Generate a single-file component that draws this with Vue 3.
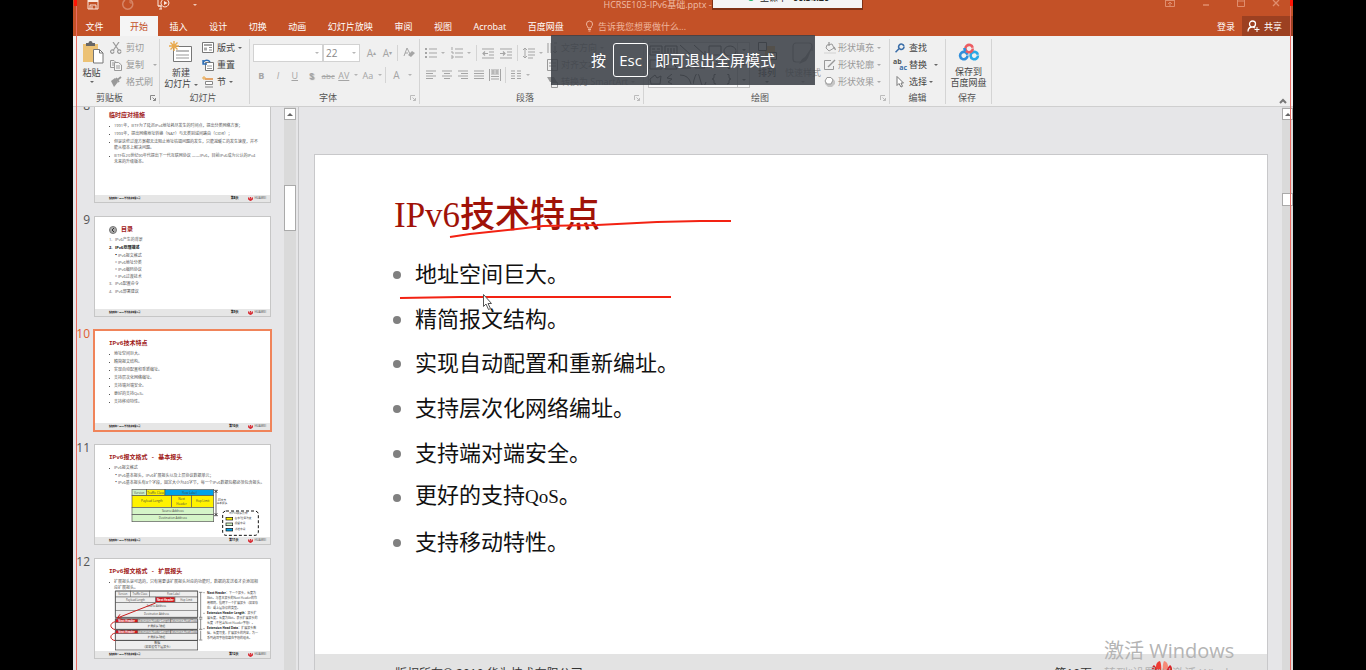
<script setup>
import { h } from 'vue'

const icons = {
  save: [12, 10, [['M1 -2V9H11V-2', 1], ['M3 9V5H9V9', 1], ['M1 1H11', 2], ['M5 6V9', 1]]],
  redo: [12, 10, [['M8.500 0A5 5 0 1 1 3 0', 1.5], ['M8 -1V3H11', 1]]],
  show: [13, 10, [['M1 -1V6H4M1 6H5', 1], ['M5 9H2M4 6V9', 1], ['M8 -1A4 4 0 1 1 7.900 -1', 1], ['M7 1L10.500 3L7 5Z', 0, 'currentColor']]],
  ribbonopts: [10, 8, [['M.5 0V6.500H9.500V0M0 .5H10', 1], ['M5 6V2M3 4L5 2L7 4', 1]]],
  min: [8, 8, [['M1 5H7', 1.5]]],
  max: [8, 8, [['M.5 0V6.500H7.500V0M0 1H8', 1]]],
  close: [8, 8, [['M1 0L7 6M7 0L1 6', 1.3]]],
  bulb: [9, 12, [['M3 8C3 6.500 1.500 6 1.500 4A3 3 0 0 1 7.500 4C7.500 6 6 6.500 6 8Z', 1], ['M3 9.500H6M3.500 11H5.500', 1]]],
  user: [13, 12, [['M8.500 4A3 3 0 1 1 5.500 1A3 3 0 0 1 8.500 4M1 11.500C1 8.500 3 7 5.500 7C6.500 7 7.500 7.500 8 8', 1.3], ['M10 7V12M7.500 9.500H12.500', 1]]],
  paste: [22, 23, [['M1 3H16V21H1Z', 0, '#ecc275'], ['M4 5V2H6.500A2 2 0 0 1 10.500 2H13V5Z', 0, '#666'], ['M11.500 8.500H17.500L21 12V22H11.500Z', 1, '#fff', '#777'], ['M17.500 8.500V12H21', 1, 'none', '#777']]],
  cut: [12, 12, [['M3 0L8.500 8M9 0L3.500 8', 1.2], ['M4 9.500A1.700 1.700 0 1 1 3.900 9M11 9.500A1.700 1.700 0 1 1 10.900 9', 1.2]]],
  copy: [12, 12, [['M4 8.500H.5V1.500H4L6 3.500', 1], ['M4.500 3.500H8.500L11.500 6V11.500H4.500Z', 1, '#f5f5f5'], ['M2 4H4M2 6H4M6 7H10M6 9H10', 1]]],
  brush: [12, 12, [['M1 5L5 2L8 6L4 11Z', 0, 'currentColor'], ['M6 5L11 1M6 2L9 6', 1.8]]],
  newslide: [24, 22, [['M4.500 5.500H22.500V20.500H4.500Z', 1, '#fff', '#777'], ['M7 9H20V11H7Z', 0, '#bbb'], ['M7 14H20M7 17H20', 1, 'none', '#999'], ['M5 0V10M0 5H10M1.500 1.500L8.500 8.500M8.500 1.500L1.500 8.500', 1.4, 'none', '#e9a94c']]],
  layout: [12, 11, [['M.5 .5H11.500V10.500H.5Z', 1, '#fff', '#777'], ['M2 3H10', 1.500, 'none', '#888'], ['M2 5.500H5V8.500H2Z', 0, '#aaa'], ['M7 5.500H10M7 8H10', 1, 'none', '#888']]],
  reset: [12, 12, [['M3.500 3.500H11.500V11.500H3.500Z', 1, '#fff', '#777'], ['M5 7H10M5 9.500H10', 1, 'none', '#999'], ['M1 5C1 1 6 0 8 3M1 1V5H5', 1.4, 'none', '#2c6db5']]],
  section: [12, 12, [['M3 3H11', 1.500, 'none', '#e08b3c'], ['M3.500 5.500H10.500V8.500H3.500Z', 1, '#fff', '#888'], ['M3 11H11', 1, 'none', '#888'], ['M2 0V4M0 2H4', 1, 'none', '#e9a94c']]],
  eraser: [12, 12, [['M1 9L4 1L7 7M2 6H5', 1], ['M5 8L9 4L12 6L8 10Z', 0, 'currentColor']]],
  bullets: [12, 12, [['M4 2H12M4 6H12M4 10H12', 1], ['M0 2H2M0 6H2M0 10H2', 2]]],
  numbers: [12, 12, [['M4 2H12M4 6H12M4 10H12', 1], ['M1 0V3M0 5H2V7M0 9H2V11H0', 1]]],
  outdent: [12, 11, [['M0 1H12M7 4H12M7 7H12M0 10H12', 1], ['M6 5.500H1M3 3.500L1 5.500L3 7.500', 1.2]]],
  indent: [12, 11, [['M0 1H12M7 4H12M7 7H12M0 10H12', 1], ['M0 5.500H5M3 3.500L5 5.500L3 7.500', 1.2]]],
  spacing: [12, 12, [['M5 2H12M5 5H12M5 8H12M5 11H10', 1], ['M2 1V11M0 3L2 1L4 3M0 9L2 11L4 9', 1]]],
  left: [12, 10, [['M1 1H11M1 3.500H8M1 6H11M1 8.500H8', 1]]],
  center: [12, 10, [['M1 1H11M3 3.500H9M1 6H11M3 8.500H9', 1]]],
  right: [12, 10, [['M1 1H11M4 3.500H11M1 6H11M4 8.500H11', 1]]],
  justify: [12, 10, [['M1 1H11M1 3.500H11M1 6H11M1 8.500H11', 1]]],
  distribute: [12, 12, [['M.5 0V12M11.500 0V12M2 1H10M2 5H10M2 7.500H10M2 10H10', 1], ['M2 3H10M4 1V5M8 1V5', 1]]],
  columns: [12, 10, [['M1 1H5M1 3.500H5M1 6H5M1 8.500H5M7 1H11M7 3.500H11M7 6H11M7 8.500H11', 1]]],
  textdir: [11, 12, [['M1 1V11M4 1V11M8 4V11M6 9L8 11L10 9M7 1H10', 1]]],
  textalign: [11, 12, [['M.5 .5H10.500V11.500H.5Z', 1], ['M2 4H9M2 7H9M5 1V3M5 9V11', 1]]],
  smart: [11, 12, [['M0 1H7L10 6H3Z', 0, 'currentColor'], ['M4.500 6.500H10.500V11.500H4.500Z', 1]]],
  arrange: [22, 20, [['M9 5H19V15H9Z', 0, '#edbb64'], ['M2.500 1.500H10.500V9.500H2.500Z', 1, '#fff', '#555'], ['M13.500 11.500H20.500V18.500H13.500Z', 1, '#fff', '#555']]],
  quick: [24, 24, [['M4 2H18Q21 2 21 5V10M2 6Q2 2 5 2M2 5V18Q2 21 5 21H10', 1.2], ['M22 4L14 16L11 18L8 23L15 20L17 17Z', 0, 'currentColor']]],
  fill: [12, 12, [['M3 3L8 2L10 6L5 9L2 6Z', 1], ['M5 4V0M10 5L11.500 8', 1.3], ['M0 11H12', 1.5, 'none', '#ddd']]],
  outline: [12, 12, [['M7 1.500H.5V10.500H9.500V7', 1], ['M4 8L11 1', 1.5]]],
  effect: [12, 12, [['M3 2H8L11 5V8L8 11H4L1 8V5Z', 0, '#c5c5c5'], ['M3 1.500H7L9 4L7 8H3L1 5Z', 1, '#fff']]],
  find: [10, 10, [['M9 3.500A2.700 2.700 0 1 1 8.900 3M4.200 5.500L.5 9.300', 1.6, 'none', '#3b6ea8']]],
  select: [8, 12, [['M1 .5V9.500L3 7.500L5 11L6.500 10.300L5 7H7.500Z', 1, '#fff', '#777']]],
  cloud: [22, 18, [['M9.500 12.500A3.700 3.700 0 1 1 9.400 11.700', 2.600, 'none', '#2f8fdc'], ['M20 12.500A3.700 3.700 0 1 1 19.900 11.700', 2.600, 'none', '#2aa9e6'], ['M14.800 5.500A3.700 3.700 0 1 1 14.700 4.700', 2.600, 'none', '#ec5c62'], ['M7.500 8.500A5 5 0 0 1 6.500 5', 2.600, 'none', '#2f8fdc']]],
  launch: [6, 6, [['M.5 5V.5H5M2.500 2.500L5.500 5.500M5.500 3V5.500H3', 1]]]
}

const Icon = ({ name }) => {
  const [w, hgt, shapes] = icons[name]
  return h('svg', { width: w, height: hgt, viewBox: `0 0 ${w} ${hgt}`, 'aria-hidden': 'true' },
    shapes.map(([d, sw, fill = 'none', stroke = 'currentColor']) =>
      h('path', { d, fill, stroke: sw ? stroke : 'none', 'stroke-width': sw || 0 })))
}
Icon.props = ['name']

const tabs = ['开始', '插入', '设计', '切换', '动画', '幻灯片放映', '审阅', '视图', 'Acrobat', '百度网盘']
const aligns = ['left', 'center', 'right', 'justify']
const shapes = [
  'M1 1H13V10H1ZM3 4H6M3 7H11M8 4H11', 'M1 1H13V10H1ZM4 3V8M7 3V8M10 3V8', 'M1 0L12 10', 'M1 0L12 10M8 10H12V6', 'M1 1H13V10H1Z', 'M13 5.500A6 5 0 1 1 12.900 5',
  'M1 1H13V10H1Z', 'M7 0L13 10H1Z', 'M2 1V9H12', 'M2 1V9H12L9 6', 'M1 5H12L8 2M12 5L8 8', 'M6 0V10L3 6M6 10L9 6',
  'M2 10L1 5L6 1L8 4L12 2L11 10Z', 'M8 0L3 4L8 5L4 8L8 10', 'M1 1Q10 1 12 10', 'M0 10Q4 -8 7 5T13 8', 'M8 0Q5 0 6 3Q6 5 4 5Q6 5 6 7Q5 10 8 10', 'M4 0Q7 0 6 3Q6 5 8 5Q6 5 6 7Q7 10 4 10'
]

const points = ['地址空间巨大。', '精简报文结构。', '实现自动配置和重新编址。', '支持层次化网络编址。', '支持端对端安全。', '更好的支持QoS。', '支持移动特性。']

const slides = [
  { n: 8, title: '临时应对措施', items: [
    { t: '1991年，IETF为了延迟IPv4地址耗尽发生的时间点，提出分类网络方案；' },
    { t: '1993年，提出网络地址转换（NAT）与无类别域间路由（CIDR）；' },
    { t: '但是这些过渡方案都无法阻止地址枯竭问题的发生，只能减缓它的发生速度，并不\n能从根本上解决问题。' },
    { t: 'IETF在20世纪90年代提出下一代互联网协议 ——IPv6，目前IPv6成为公认的IPv4\n未来的升级版本。' }
  ] },
  { n: 9, title: '目录', toc: true, items: [
    { m: '1.', t: 'IPv6产生的背景', k: 'num' }, { m: '2.', t: 'IPv6原理描述', k: 'num strong' },
    { m: '▪', t: 'IPv6报文格式', k: 'sub dark' }, { m: '▫', t: 'IPv6地址分类', k: 'sub' },
    { m: '▫', t: 'IPv6编码协议', k: 'sub' }, { m: '▫', t: 'IPv6过渡技术', k: 'sub' },
    { m: '3.', t: 'IPv6配置命令', k: 'num' }, { m: '4.', t: 'IPv6部署建议', k: 'num' }
  ] },
  { n: 10, title: 'IPv6技术特点', active: true, items: points.map(t => ({ t })) },
  { n: 11, title: 'IPv6报文格式 - 基本报头', items: [
    { t: 'IPv6报文格式' },
    { m: '▪', t: 'IPv6基本报头，IPv6扩展报头以及上层协议数据单元；', k: 'sub' },
    { m: '▪', t: 'IPv6基本报头有8个字段，固定大小为40字节，每一个IPv6数据包都必须包含报头。', k: 'sub' }
  ] },
  { n: 12, title: 'IPv6报文格式 - 扩展报头', items: [
    { t: '扩展报头是可选的，只有需要该扩展报头对应的功能时，数据的发送者才会添加相\n应扩展报头。' }
  ] }
]

const basicCells = [
  [186, 154, 43, 18, '#ccefca', 'Version'], [229, 154, 56, 18, '#fff200', 'Traffic Class'], [285, 154, 146, 18, '#00a2e8', 'Flow Label'],
  [186, 172, 119, 35, '#fff200', 'Payload Length'], [305, 172, 59, 35, '#fff200', 'Next', 'Header'], [364, 172, 67, 35, '#fff200', 'Hop Limit'],
  [186, 207, 245, 22, '#d5f5c8', 'Source Address'], [186, 229, 245, 21, '#d5f5c8', 'Destination Address']
]
const extCells = [
  [136, 116, 45, 18, '#eee', 'Version'], [181, 116, 57, 18, '#eee', 'Traffic Class'], [238, 116, 145, 18, '#eee', 'Flow Label'],
  [136, 134, 121, 17, '#eee', 'Payload Length'], [257, 134, 58, 17, '#d4161b', 'Next Header'], [315, 134, 68, 17, '#eee', 'Hop Limit'],
  [136, 151, 247, 23, '#eee', 'Source Address'], [136, 174, 247, 21, '#eee', 'Destination Address'],
  [136, 211, 247, 20, '#eee', '扩展报头1数据'], [136, 200, 68, 11, '#d4161b', 'Next Header'], [204, 200, 98, 11, '#eee', 'Extension Header Length'], [302, 200, 81, 11, '#eee', 'Extension Head Data'],
  [136, 244, 247, 20, '#eee', '扩展报头2数据'], [136, 233, 68, 11, '#d4161b', 'Next Header'], [204, 233, 98, 11, '#eee', 'Extension Header Length'], [302, 233, 81, 11, '#eee', 'Extension Head Data']
]
const notes = ['Next Header：下一个报头，长度为', '8bit。与基本报头的Next Header的作', '用相同，指明下一个扩展报头（如果存', '在）或上层协议的类型。', 'Extension Header Length：报头扩', '展长度，长度为8bit。表示扩展报头的', '长度（不包含Next Header字段）。', 'Extension Head Data：扩展报头数', '据，长度可变，扩展报头的内容，为一', '系列选项字段和填充字段的组合。']
</script>

<template>
  <div class="screen" lang="zh-CN">
    <div class="app">
      <header class="titlebar">
        <div class="quick">
          <button aria-label="保存"><Icon name="save" /></button>
          <button aria-label="重做" class="dim"><Icon name="redo" /></button>
          <button aria-label="从头开始放映"><Icon name="show" /></button>
          <button aria-label="自定义快速访问工具栏"><i class="caret"></i></button>
        </div>
        <div class="doc">HCRSE103-IPv6基础.pptx - PowerPoint</div>
        <div class="win">
          <button aria-label="功能区显示选项"><Icon name="ribbonopts" /></button>
          <button aria-label="最小化"><Icon name="min" /></button>
          <button aria-label="最大化"><Icon name="max" /></button>
          <button aria-label="关闭"><Icon name="close" /></button>
        </div>
      </header>

      <nav class="tabbar">
        <button class="file">文件</button>
        <div class="tabs">
          <button v-for="t in tabs" :key="t" class="tab" :class="{ on: t === '开始' }">{{ t }}</button>
        </div>
        <button class="tell"><Icon name="bulb" />告诉我您想要做什么...</button>
        <button class="login">登录</button>
        <button class="share"><Icon name="user" />共享</button>
      </nav>

      <section class="ribbon">
        <div class="group clip">
          <div class="body">
            <button class="big"><Icon name="paste" /><span>粘贴</span><i class="caret"></i></button>
            <div class="rows off">
              <button><Icon name="cut" />剪切</button>
              <button><Icon name="copy" />复制<i class="caret far"></i></button>
              <button><Icon name="brush" />格式刷</button>
            </div>
          </div>
          <div class="label"><span>剪贴板</span><Icon name="launch" /></div>
        </div>

        <div class="group slidesg">
          <div class="body">
            <button class="big"><Icon name="newslide" /><span>新建</span><span>幻灯片 <i class="caret"></i></span></button>
            <div class="rows">
              <button><Icon name="layout" />版式<i class="caret"></i></button>
              <button><Icon name="reset" />重置</button>
              <button><Icon name="section" />节<i class="caret"></i></button>
            </div>
          </div>
          <div class="label"><span>幻灯片</span></div>
        </div>

        <div class="group fontg">
          <div class="body lines off">
            <div class="line">
              <div class="combo family"><select aria-label="字体"><option></option></select><i class="caret"></i></div>
              <div class="combo size"><select aria-label="字号"><option>22</option></select><i class="caret"></i></div>
              <button class="grow" aria-label="增大字号">A<sup>▴</sup></button>
              <button class="grow small" aria-label="减小字号">A<sup>▾</sup></button>
              <i class="sep"></i>
              <button aria-label="清除格式"><Icon name="eraser" /></button>
            </div>
            <div class="line glyphs">
              <button><b>B</b></button>
              <button><em>I</em></button>
              <button><u>U</u></button>
              <button class="shadow"><b>S</b></button>
              <button class="abc"><s>abc</s></button>
              <button class="av"><u>AV</u><i class="caret"></i></button>
              <button class="aa">Aa<i class="caret"></i></button>
              <i class="sep"></i>
              <button class="fc">A<i class="caret"></i></button>
            </div>
          </div>
          <div class="label"><span>字体</span><Icon name="launch" class="faint" /></div>
        </div>

        <div class="group para">
          <div class="body off">
            <div class="lines">
              <div class="line">
                <button aria-label="项目符号"><Icon name="bullets" /><i class="caret"></i></button>
                <button aria-label="编号"><Icon name="numbers" /><i class="caret"></i></button>
                <i class="sep"></i>
                <button aria-label="减少缩进"><Icon name="outdent" /></button>
                <button aria-label="增加缩进"><Icon name="indent" /></button>
                <i class="sep"></i>
                <button aria-label="行距"><Icon name="spacing" /><i class="caret"></i></button>
              </div>
              <div class="line tight">
                <button v-for="a in aligns" :key="a" :aria-label="a"><Icon :name="a" /></button>
                <button aria-label="分散对齐"><Icon name="distribute" /></button>
                <i class="sep"></i>
                <button aria-label="分栏"><Icon name="columns" /><i class="caret"></i></button>
              </div>
            </div>
            <div class="rows">
              <button><Icon name="textdir" />文字方向<i class="caret"></i></button>
              <button><Icon name="textalign" />对齐文本<i class="caret"></i></button>
              <button><Icon name="smart" />转换为 SmartArt<i class="caret"></i></button>
            </div>
          </div>
          <div class="label"><span>段落</span><Icon name="launch" class="faint" /></div>
        </div>

        <div class="group draw">
          <div class="body">
            <div class="gallery">
              <div class="shapes">
                <svg v-for="(d, i) in shapes" :key="i" width="14" height="11" viewBox="0 0 14 11"><path :d="d" fill="none" stroke="#555" /></svg>
              </div>
              <div class="updown"><i class="caret"></i><i class="caret"></i><i class="caret"></i></div>
            </div>
            <button class="big arr"><Icon name="arrange" /><span>排列</span><i class="caret"></i></button>
            <button class="big off qs"><Icon name="quick" /><span>快速样式</span><i class="caret"></i></button>
            <div class="rows off">
              <button><Icon name="fill" />形状填充<i class="caret"></i></button>
              <button><Icon name="outline" />形状轮廓<i class="caret"></i></button>
              <button><Icon name="effect" />形状效果<i class="caret"></i></button>
            </div>
          </div>
          <div class="label"><span>绘图</span><Icon name="launch" class="faint" /></div>
        </div>

        <div class="group edit">
          <div class="body">
            <div class="rows">
              <button><span class="ic"><Icon name="find" /></span>查找</button>
              <button><span class="ic rep"><b>ab</b><b>ac</b></span>替换<i class="caret far"></i></button>
              <button><span class="ic"><Icon name="select" /></span>选择<i class="caret"></i></button>
            </div>
          </div>
          <div class="label"><span>编辑</span></div>
        </div>

        <div class="group cloud">
          <div class="body">
            <button class="big"><Icon name="cloud" /><span>保存到</span><span>百度网盘</span></button>
          </div>
          <div class="label"><span>保存</span></div>
        </div>

        <button class="collapse" aria-label="折叠功能区"><svg width="8" height="6" viewBox="0 0 8 6"><path d="M1 5L4 2L7 5" fill="none" stroke="#777" stroke-width="2" /></svg></button>
      </section>

      <main class="work">
        <aside class="panel">
          <ol class="thumbs">
            <li v-for="s in slides" :key="s.n" :class="{ active: s.active }">
              <span class="no">{{ s.n }}</span>
              <div class="thumb">
                <h3><svg v-if="s.toc" width="8" height="8" viewBox="0 0 8 8"><circle cx="4" cy="4" r="3.500" fill="#aaa" stroke="#777" /><path d="M5 2L3 4L5 6" fill="none" stroke="#333" /></svg>{{ s.title }}</h3>
                <ul>
                  <li v-for="(it, i) in s.items" :key="i" :class="it.k"><span v-if="it.m" class="mk">{{ it.m }}</span><i v-else class="dot"></i><span>{{ it.t }}</span></li>
                </ul>
                <svg v-if="s.n === 11" class="diagram" viewBox="75 20 525 297">
                  <g v-for="(c, i) in basicCells" :key="i">
                    <rect :x="c[0]" :y="c[1]" :width="c[2]" :height="c[3]" :fill="c[4]" stroke="#555" stroke-width="2" />
                    <text :x="c[0] + c[2] / 2" :y="c[1] + c[3] / 2 + (c[6] ? -3 : 3)" font-size="9">{{ c[5] }}</text>
                    <text v-if="c[6]" :x="c[0] + c[2] / 2" :y="c[1] + c[3] / 2 + 10" font-size="9">{{ c[6] }}</text>
                  </g>
                  <path d="M432 156H444M432 232H444M438 158V230M434 164L438 157L442 164M434 224L438 231L442 224" fill="none" stroke="#222" stroke-width="2" />
                  <text x="456" y="187" font-size="8">40字节</text>
                  <text x="456" y="197" font-size="8">基本报头</text>
                  <rect x="458" y="218" width="107" height="73" rx="10" fill="none" stroke="#111" stroke-width="3" stroke-dasharray="9 6" />
                  <text x="505" y="227" font-size="8">与IPv4报头比较</text>
                  <rect x="468" y="237" width="20" height="8" fill="#fff200" stroke="#111" stroke-width="2" /><text x="519" y="242" font-size="8">名字/位置改变</text>
                  <rect x="468" y="254" width="20" height="8" fill="#d5f5c8" stroke="#111" stroke-width="2" /><text x="510" y="258" font-size="8">保留字段</text>
                  <rect x="468" y="270" width="20" height="8" fill="#00a2e8" stroke="#111" stroke-width="2" /><text x="510" y="275" font-size="8">新增字段</text>
                </svg>
                <svg v-if="s.n === 12" class="diagram" viewBox="75 20 525 297">
                  <g v-for="(c, i) in extCells" :key="i">
                    <rect :x="c[0]" :y="c[1]" :width="c[2]" :height="c[3]" :fill="c[4]" stroke="#777" stroke-width="2" />
                    <text :x="c[0] + c[2] / 2" :y="c[1] + c[3] / 2 + 3" font-size="8" :class="{ inv: c[4] === '#d4161b' }">{{ c[5] }}</text>
                  </g>
                  <rect x="136" y="265" width="247" height="28" fill="#eee" stroke="#444" stroke-width="2" />
                  <text x="262" y="275" font-size="9">数据</text>
                  <text x="262" y="288" font-size="9">（如果没有下层报头）</text>
                  <path d="M136 116H383V195H136ZM136 199H383V231H136ZM136 233H383V264H136Z" fill="none" stroke="#444" stroke-width="2" />
                  <path d="M257 152L142 197M150 186L142 197L155 197M136 208C118 212 118 228 136 232M136 242C118 246 118 262 136 265" fill="none" stroke="#c82020" stroke-width="3" />
                  <path d="M387 120H397M392 120V195M387 195H397M387 200H397M392 200V231M387 231H397M392 235V262M387 263H397" fill="none" stroke="#555" stroke-width="2" />
                  <text v-for="(n, i) in notes" :key="n" class="note" x="411" :y="124 + i * 15 + (i > 3 ? 2 : 0)" font-size="9"><template v-if="n.includes('：') && i !== 2"><tspan class="hd">{{ n.split('：')[0] }}</tspan>：{{ n.split('：')[1] }}</template><template v-else>{{ n }}</template></text>
                  <path d="M401 121h2M401 183h2M401 229h2" stroke="#333" stroke-width="3" />
                </svg>
                <div class="tfoot"><b>版权所有© 2019 华为技术有限公司</b><b class="pg">第{{ s.n }}页</b><span class="hw"><svg width="5" height="4" viewBox="0 0 10 8"><path d="M5 8L0 4L1 1L5 6L4 0H6L5 6L9 1L10 4Z" fill="#d8232a" stroke="#d8232a" /></svg>HUAWEI</span></div>
              </div>
            </li>
          </ol>
        </aside>
        <div class="bar side"><span class="up"><i class="tri"></i></span><span class="knob"></span></div>
        <div class="split"></div>
        <div class="editor">
          <article class="slide">
            <h1>IPv6技术特点</h1>
            <ul class="points">
              <li v-for="p in points" :key="p">
                <span v-if="p.includes('QoS')">更好的支持<span class="qos">QoS</span>。</span>
                <span v-else>{{ p }}</span>
              </li>
            </ul>
            <footer><span>版权所有© 2019 华为技术有限公司</span><span class="page">第10页</span>
              <svg class="huawei" width="28" height="28" viewBox="0 0 28 28"><path d="M13 18C7 12 6 2 12 1Q14 5 13 18Z" fill="#ee3d35" /><path d="M15 18C21 12 22 2 16 1Q14 5 15 18Z" fill="#f58a78" /><path d="M11 19C4 15 2 8 6 5Q10 8 11 19ZM17 19C24 15 26 8 22 5Q18 8 17 19Z" fill="#d8232a" /><path d="M10 21Q0 19 1 11Q7 13 10 21ZM18 21Q28 19 27 11Q21 13 18 21Z" fill="#c4161c" /></svg>
            </footer>
            <svg class="ink" width="430" height="170" viewBox="0 0 430 170" aria-hidden="true">
              <path d="M135 82L155 79L202 74L228 71L282 70L342 67L385 66H416M85 143L145 142H356" fill="none" stroke="#f32213" stroke-width="2" />
              <path d="M168.500 139.500V151.500L171 149L173.500 154.500L175.500 153.500L173 148.500H176.500Z" fill="#fff" stroke="#555" />
            </svg>
          </article>
        </div>
        <div class="bar main"><span class="up"><i class="tri"></i></span><span class="knob"></span></div>
      </main>
      <i class="edge l"></i><i class="edge r"></i>
    </div>

    <div class="status"><i></i>上课中 <b>00:54:20</b> <i class="caret"></i></div>
    <div class="esc"><span>按</span><kbd>Esc</kbd><span>即可退出全屏模式</span></div>
    <div class="activate"><p>激活 Windows</p><small>转到“设置”以激活 Windows。</small></div>
  </div>
</template>

<style>
body { margin: 0; background: #000; }
</style>

<style scoped>
* { box-sizing: border-box; }
.screen { position: relative; height: 100vh; padding: 0 73px; overflow: hidden; background: #000; font: 9px/11px "Open Sans", "Noto Sans CJK SC", sans-serif; color: #444; }
.app { position: relative; height: 100%; display: flex; flex-direction: column; overflow: hidden; background: #e6e6e8; }
button { border: 0; padding: 0; margin: 0; background: none; font: inherit; color: inherit; display: flex; align-items: center; white-space: nowrap; }
svg { flex: none; display: block; }
.caret { flex: none; display: inline-block; border: 2px solid transparent; border-top-color: currentColor; border-bottom: 0; vertical-align: middle; opacity: .8; }

.titlebar { flex: none; height: 16px; display: grid; grid-template-columns: 1fr auto 1fr; background: #c35127; color: #fbe6dc; line-height: 10px; }
.quick { display: flex; align-items: flex-start; gap: 23px; padding-left: 14px; }
.quick button { height: 9px; }
.dim { opacity: .35; }
.doc { color: #f0bda6; }
.win { display: flex; justify-content: flex-end; align-items: flex-start; gap: 27px; padding-right: 13px; color: #e08e6e; }
.tabbar { flex: none; display: flex; align-items: stretch; height: 20px; background: #c35127; color: #fff; }
.file { width: 43px; margin-right: 4px; justify-content: center; }
.tabs { width: 454px; display: flex; justify-content: space-between; }
.tab { padding: 0 10px; }
.tab.on { background: #f5f5f5; color: #c35127; }
.tell { gap: 4px; margin-left: 11px; color: #efb59d; }
.login { margin-left: auto; }
.share { margin-left: 7px; width: 51px; padding-left: 5px; gap: 4px; background: #9c4021; }

.ribbon { flex: none; display: flex; height: 71px; padding: 3px 0 2px 4px; background: #f0f0f0; border-bottom: 1px solid #cfcfcf; }
.group { flex: none; display: flex; flex-direction: column; justify-content: space-between; border-right: 1px solid #d4d4d4; }
.body { display: flex; height: 51px; }
.label { display: flex; align-items: center; padding: 0 3px 0 0; line-height: 12px; color: #555; }
.label span { flex: 1; text-align: center; }
.label svg { color: #888; }
.label .faint { color: #bbb; }
.off { color: #999; }
.off .lines, .off.lines { color: #a5a5a5; }
.rows { display: flex; flex-direction: column; }
.rows button { height: 17px; gap: 4px; }
.rows .far { margin-left: 5px; }
.big { flex-direction: column; padding-top: 2px; }
.big > svg { margin-bottom: 3px; }
.big > .caret { margin-top: 3px; }
.clip { width: 83px; }
.clip .label span { padding-right: 8px; }
.clip .big { width: 29px; }
.clip .big > svg { margin-left: 3px; }
.clip .rows { margin-left: 4px; }
.slidesg { width: 90px; }
.slidesg .big { width: 42px; }
.slidesg .big > svg { margin-bottom: 4px; }
.slidesg .rows button { gap: 3px; }
.fontg { width: 170px; }
.fontg .label span, .para .label span, .draw .label span { padding-right: 4px; }
.lines { display: flex; flex-direction: column; gap: 4px; padding: 5px 0 0 3px; }
.line { display: flex; align-items: center; height: 18px; }
.combo { display: flex; align-items: center; height: 18px; padding-right: 3px; border: 1px solid #d2d2d2; background: #fff; }
.combo select { flex: 1; min-width: 0; height: 16px; padding: 0 2px; border: 0; background: #fff; color: #888; appearance: none; font: 10px "Open Sans", sans-serif; }
.family { width: 70px; }
.size { width: 37px; }
.sep { width: 1px; height: 16px; background: #d4d4d4; }
.grow { width: 16px; justify-content: flex-end; font-size: 10px; }
.grow sup { font-size: 6px; }
.fontg .line:first-child .sep { margin: 0 5px; }
.glyphs button { width: 17px; justify-content: center; gap: 4px; }
.glyphs .caret { margin-left: 1px; }
.glyphs .shadow { text-shadow: 1px 1px 1px #999; }
.glyphs .abc { font-size: 8px; }
.glyphs .av { width: 24px; }
.glyphs .aa { width: 25px; }
.glyphs .fc { width: 34px; font-size: 10px; gap: 7px; }
.para { width: 224px; }
.para .lines { width: 127px; padding-left: 5px; }
.para .line { gap: 5px; }
.para .line button { gap: 4px; }
.para .line > button + button { margin-left: 1px; }
.para .tight { gap: 4px; }
.para .tight > button + button { margin-left: 0; }
.para .rows button { gap: 3px; }
.draw { width: 246px; }
.draw .body { padding-left: 4px; }
.gallery { display: flex; width: 102px; height: 46px; margin-top: 3px; border: 1px solid #c4c4c4; background: #fafafa; }
.shapes { flex: 1; display: grid; grid-template-columns: repeat(6, 1fr); place-items: center; }
.updown { width: 12px; display: flex; flex-direction: column; justify-content: space-around; align-items: center; border-left: 1px solid #c4c4c4; }
.arr { width: 34px; }
.qs { width: 38px; }
.big.qs > svg { margin-bottom: 2px; }
.big.arr > svg { margin-bottom: 6px; }
.draw .rows { margin-left: 2px; }
.draw .rows button { gap: 2px; }
.draw .rows .caret { margin-left: 1px; }
.edit { width: 56px; padding-left: 3px; }
.edit .rows button { gap: 2px; }
.ic { width: 14px; display: flex; justify-content: center; }
.ic.rep { flex-direction: column; align-items: flex-start; font-size: 7px; line-height: 6px; color: #555; }
.rep b + b { align-self: flex-end; color: #3b6ea8; }
.cloud { width: 46px; }
.cloud .big { width: 100%; padding-top: 4px; }
.cloud .big > svg { margin-bottom: 5px; }
.collapse { margin-left: auto; align-self: flex-end; margin-right: 6px; }

.work { flex: 1; min-height: 0; display: flex; }
.panel { flex: none; width: 211px; overflow: hidden; }
ol, ul { margin: 0; padding: 0; list-style: none; }
.thumbs { display: flex; flex-direction: column; gap: 13px; margin-top: -5px; }
.thumbs > li { display: flex; }
.no { width: 21px; padding-right: 4px; font-size: 12px; line-height: 8px; color: #555; white-space: nowrap; display: flex; justify-content: flex-end; }
.active .no { color: #e0602e; }
.thumb { position: relative; width: 177px; height: 101px; padding: 9px 0 0 14px; border: 1px solid #c6c6c6; background: #fff; font-size: 4px; line-height: 6px; color: #555; }
.active .thumb { border-color: #f0845a; outline: 2px solid #f0845a; outline-offset: -1px; }
.thumb h3 { display: flex; align-items: center; gap: 4px; margin: 0 0 2px; font: 700 6px/8px "Liberation Mono", "Noto Sans CJK SC", monospace; color: #a01818; }
.thumb li { display: flex; padding: 1px 0; white-space: pre; }
.dot { flex: none; width: 1px; height: 1px; margin: 3px 4px 0 0; background: #555; }
.mk { width: 5px; }
.thumb .num .mk { width: 6px; }
.thumb .sub { padding: 1px 0 0 5px; }
.thumb .sub .mk { width: 4px; }
.thumb .dark .mk { color: #000; }
.thumb .strong { font-weight: 700; color: #111; }
.diagram { position: absolute; inset: 0; width: 100%; height: 100%; }
.diagram text { text-anchor: middle; fill: #444; }
.diagram .inv { fill: #fff; font-weight: 700; }
.diagram .note { text-anchor: start; }
.diagram .hd { fill: #111; font-weight: 700; }
.tfoot { position: absolute; left: 0; right: 0; bottom: 0; display: flex; align-items: center; height: 7px; padding: 0 4px 0 14px; background: #e6e6e6; font-size: 2px; line-height: 7px; color: #000; }
.tfoot .pg { margin-left: auto; font-size: 3px; }
.hw { display: flex; align-items: center; gap: 1px; margin-left: 10px; font-size: 3px; color: #444; }
.bar { flex: none; width: 12px; display: flex; flex-direction: column; padding-top: 1px; background: #dadada; }
.bar span { border: 1px solid #aaa; background: #fff; }
.up { height: 12px; display: flex; align-items: center; justify-content: center; }
.tri { border: 3px solid transparent; border-bottom-color: #666; border-top: 0; }
.side .knob { height: 46px; margin-top: 65px; }
.bar.main { width: 11px; }
.main .knob { height: 13px; margin-top: 73px; }
.split { width: 3px; border-right: 1px solid #c6c6c8; }
.editor { flex: 1; padding: 47px 14px 0 15px; overflow: hidden; }
.slide { position: relative; height: 537px; display: flex; flex-direction: column; border: 1px solid #c8c8ca; background: #fff; color: #111; }
.slide h1 { margin: 41px 0 14px 79px; font: 500 35px/40px "Liberation Serif", "Noto Sans CJK SC", serif; color: #a01208; }
.points { display: grid; grid-auto-rows: 1fr; height: 312px; margin-left: 78px; font: 22px/24px "Noto Sans CJK SC", sans-serif; }
.points li { display: flex; align-items: center; }
.points li::before { content: ""; width: 8px; height: 8px; margin: 6px 14px 0 0; border-radius: 50%; background: #808080; }
.qos { font-family: "Liberation Serif", serif; font-size: 19px; }
.slide footer { display: flex; align-items: center; height: 36px; margin-top: auto; padding: 3px 91px 0 80px; background: #e3e3e3; font-size: 12px; color: #333; }
.page { margin-left: auto; }
.huawei { margin-left: 56px; }
.ink { position: absolute; left: 0; top: 0; }
.edge { position: absolute; top: 0; bottom: 0; width: 1px; background: #ec6b60; }
.edge::before { content: ""; position: absolute; top: 0; width: 3px; height: 6px; background: #ff1505; }
.edge.l { left: 3px; }
.edge.l::before { right: 0; }
.edge.r { right: 2px; }
.edge.r::before { left: 0; }

.status { position: absolute; left: 50%; top: -11px; margin-left: 29px; width: 151px; height: 21px; display: flex; align-items: center; gap: 6px; padding: 0 0 3px 35px; background: #f4f4f4; border: 1px solid #7e3115; border-bottom-width: 2px; font-size: 9px; line-height: 16px; color: #222; white-space: nowrap; }
.status i:first-child { width: 6px; height: 6px; border-radius: 50%; background: #18b267; }
.esc { position: absolute; left: 50%; top: 35px; transform: translateX(-50%); display: flex; align-items: center; gap: 7px; height: 50px; padding: 0 40px; background: rgba(60, 64, 71, .87); color: #fff; font-size: 15px; line-height: 20px; white-space: nowrap; }
.esc kbd { width: 35px; height: 34px; border: 1px solid #fff; border-radius: 3px; font: 15px/32px "Open Sans", sans-serif; text-align: center; }
.activate { position: absolute; right: 103px; bottom: -13px; width: 159px; color: #b4b4b4; white-space: nowrap; }
.activate p { margin: 0 0 2px; font-size: 20px; line-height: 24px; }
.activate small { display: block; font-size: 12px; line-height: 18px; }
</style>
